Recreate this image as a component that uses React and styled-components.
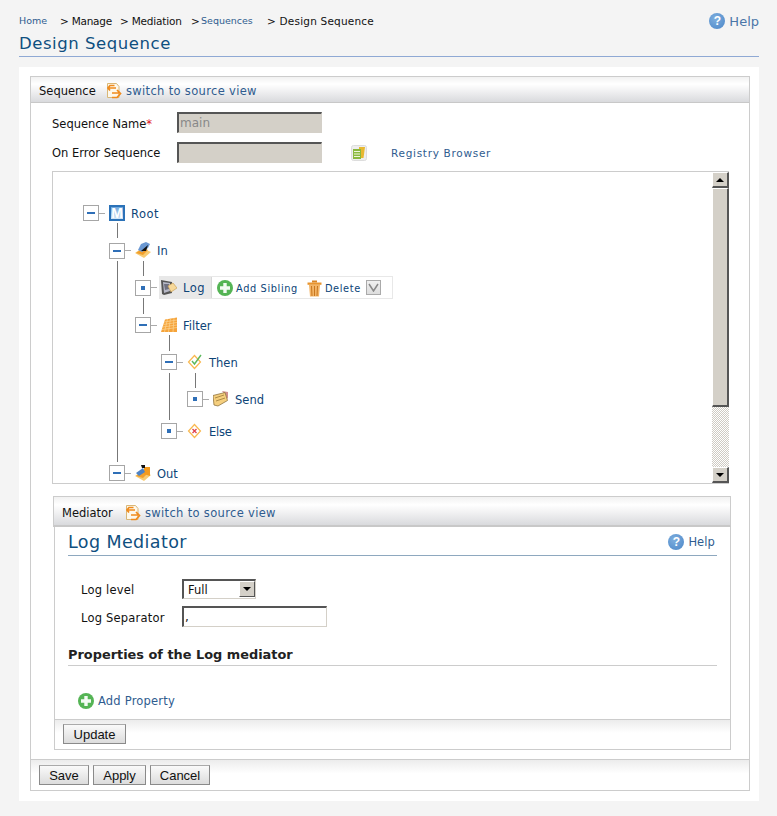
import React from "react";
import styled, { createGlobalStyle } from "styled-components";

const Global = createGlobalStyle`
  html, body { margin: 0; padding: 0; background: #f4f4f4; }
  body { font-family: "DejaVu Sans", Verdana, sans-serif; font-size: 11px; color: #111; }
`;

const Page = styled.div`
  width: 777px;
  height: 816px;
  box-sizing: border-box;
  padding: 14px 18px 0 19px;
  overflow: hidden;
`;
const Top = styled.div`
  height: 42px;
  border-bottom: 1px solid #8fa9d4;
  position: relative;
  box-sizing: content-box;
`;
const Crumbs = styled.div`
  display: flex;
  height: 14px;
  line-height: 14px;
  white-space: pre;
  color: #111;
`;
const Crumb = styled.span`
  width: ${(p) => p.$w}px;
  color: ${(p) => (p.$link ? "#2f5c8f" : "#111")};
  font-size: ${(p) => (p.$link ? "9.5px" : "10.5px")};
  letter-spacing: ${(p) => p.$ls || 0}px;
`;
const Title = styled.h1`
  margin: 5px 0 0;
  padding-top: 1px;
  font-size: 16.5px;
  line-height: 20px;
  font-weight: 400;
  color: #0f4f7f;
  letter-spacing: 0.55px;
`;
const TopHelp = styled.div`
  position: absolute;
  right: 0;
  top: -1px;
  display: flex;
  align-items: center;
  gap: 4px;
  font-size: 13px;
  color: #4a76a8;
`;
const HelpDot = styled.span`
  width: ${(p) => p.$s}px;
  height: ${(p) => p.$s}px;
  border-radius: 50%;
  background: radial-gradient(circle at 40% 35%, #7eaede, #4a86c8);
  color: #fff;
  font: bold ${(p) => p.$s - 4}px/${(p) => p.$s}px "Liberation Sans", sans-serif;
  text-align: center;
  display: inline-block;
`;
const Sheet = styled.div`
  margin-top: 10px;
  background: #fff;
  height: 734px;
  box-sizing: border-box;
  padding: 9px 9px 0 11px;
`;
const Box = styled.section`
  border: 1px solid #ccc;
  height: 715px;
  box-sizing: border-box;
  display: flex;
  flex-direction: column;
`;
const Header = styled.div`
  height: 26px;
  box-sizing: border-box;
  border-bottom: 1px solid #c8c8c8;
  background: linear-gradient(#f1f1f1, #ffffff 28%, #f4f4f5 50%, #d9dadd);
  display: flex;
  align-items: center;
  padding: 2px 0 0 8px;
  font-size: 11.5px;
  flex: none;
`;
const HeadLabel = styled.span`
  width: ${(p) => p.$w}px;
  color: #111;
`;
const Link = styled.a`
  color: #2f5c8f;
  font-size: ${(p) => p.$size || 11.5}px;
  letter-spacing: ${(p) => p.$ls ?? 0.33}px;
  margin-left: ${(p) => p.$ml || 0}px;
`;
const Body = styled.div`
  padding: 9px 21px 0 21px;
  flex: 1;
`;
const FormRow = styled.div`
  display: flex;
  align-items: center;
  height: 21px;
  margin-bottom: 9px;
`;
const Label = styled.label`
  width: ${(p) => p.$w || 125}px;
  font-size: 11.5px;
  color: #111;
  padding-top: ${(p) => p.$pt ?? 2}px;
  letter-spacing: ${(p) => p.$ls || 0}px;
`;
const Req = styled.span`
  color: #e0141c;
`;
const Field = styled.div`
  width: ${(p) => p.$w}px;
  height: ${(p) => p.$h || 21}px;
  box-sizing: border-box;
  border: 2px solid;
  border-color: #555 #d4d0c8 #d4d0c8 #555;
  border-right-width: 1px;
  border-bottom-width: 1px;
  background: ${(p) => (p.$light ? "#fff" : "#d4d0c8")};
  color: #888;
  font-size: 12px;
  line-height: 18px;
  padding-left: 1px;
  position: relative;
`;
const Tree = styled.div`
  margin-top: -1px;
  width: 677px;
  height: 313px;
  box-sizing: border-box;
  border: 1px solid #ccc;
  border-right: 0;
  display: flex;
  position: relative;
`;
const Canvas = styled.div`
  flex: 1;
  position: relative;
  overflow: hidden;
`;
const Scroll = styled.div`
  width: 17px;
  display: flex;
  flex-direction: column;
  background: repeating-conic-gradient(#cfcbc3 0 25%, #fff 0 50%) 0 0 / 2px 2px;
  flex: none;
  height: 311px;
`;
const ScrollBtn = styled.div`
  box-sizing: border-box;
  height: ${(p) => p.$h}px;
  background: #d4d0c8;
  border: 1px solid;
  border-color: #fff #555 #555 #fff;
  border-right-width: 2px;
  border-bottom-width: 2px;
  display: flex;
  align-items: center;
  justify-content: center;
  flex: none;
`;
const Fill = styled.div`
  flex: 1;
`;
const Tri = styled.i`
  width: 0;
  height: 0;
  border-left: 4px solid transparent;
  border-right: 4px solid transparent;
  ${(p) => (p.$up ? "border-bottom: 4px solid #000;" : "border-top: 4px solid #000;")}
`;
const Line = styled.div`
  position: absolute;
  left: ${(p) => p.$x - 53}px;
  top: ${(p) => p.$y - 172}px;
  width: ${(p) => p.$w || 1}px;
  height: ${(p) => p.$h || 1}px;
  background: ${(p) => (p.$w ? "#aaa" : "#777")};
`;
const Toggle = styled.div`
  position: absolute;
  left: ${(p) => p.$x - 53}px;
  top: ${(p) => p.$y - 172}px;
  width: 16px;
  height: 16px;
  box-sizing: border-box;
  border: 1px solid #a6a6a6;
  background: #fff;
  &::after {
    content: "";
    position: absolute;
    background: #2f6fb7;
    left: ${(p) => (p.$leaf ? 5 : 3)}px;
    top: ${(p) => (p.$leaf ? 5 : 6)}px;
    width: ${(p) => (p.$leaf ? 4 : 8)}px;
    height: ${(p) => (p.$leaf ? 4 : 2)}px;
  }
`;
const NodeLabel = styled.span`
  position: absolute;
  left: ${(p) => p.$x - 53}px;
  top: ${(p) => p.$y - 172 - 7}px;
  line-height: 16px;
  font-size: 11.5px;
  color: #0d4477;
  letter-spacing: ${(p) => p.$ls || 0}px;
`;
const NodeIcon = styled.div`
  position: absolute;
  left: ${(p) => p.$x - 53}px;
  top: ${(p) => p.$y - 172}px;
  width: 16px;
  height: 16px;
  display: flex;
`;
const MBadge = styled(NodeIcon)`
  box-sizing: border-box;
  border: 2px solid #2b72b8;
  background: linear-gradient(#6ea6dc, #d5e6f6);
  color: #fff;
  font: bold 14px/12px "Liberation Sans", sans-serif;
  justify-content: center;
`;
const Selected = styled.div`
  position: absolute;
  left: ${159 - 53}px;
  top: ${276 - 172}px;
  width: 234px;
  height: 23px;
  box-sizing: border-box;
  border: 1px solid #e8e8e8;
  display: flex;
  align-items: center;
`;
const SelectedHead = styled.div`
  width: 51px;
  height: 21px;
  background: #e8e8e8;
  flex: none;
  border-right: 1px solid #d8d8d8;
`;
const Action = styled.span`
  display: flex;
  align-items: center;
  font-size: 9.8px;
  letter-spacing: 0.62px;
  padding-top: 1px;
  color: #0d4477;
  margin-left: ${(p) => p.$ml}px;
  gap: ${(p) => p.$gap}px;
`;
const Drop = styled.span`
  width: 15px;
  height: 15px;
  box-sizing: border-box;
  border: 1px solid #aaa;
  background: linear-gradient(#f0f0f0, #ddd);
  margin-left: 5px;
  display: flex;
  align-items: center;
  justify-content: center;
`;
const Mediator = styled.section`
  margin-top: 12px;
  margin-left: 1px;
  width: 678px;
  height: 254px;
  box-sizing: border-box;
  display: flex;
  flex-direction: column;
`;
const MedHeader = styled(Header)`
  height: 31px;
  border: 1px solid #ccc;
  border-bottom: 2px solid #c8c8c8;
  padding-top: 3px;
`;
const MedBody = styled.div`
  flex: 1;
  margin-left: 1px;
  border: 1px solid #ccc;
  border-top: 0;
  display: flex;
  flex-direction: column;
  min-height: 0;
`;
const MedMain = styled.div`
  flex: 1;
  padding: 0 13px;
`;
const SubHead = styled.div`
  height: 28px;
  border-bottom: 1px solid #8ea8bf;
  display: flex;
  justify-content: space-between;
  align-items: center;
`;
const SubTitle = styled.h2`
  margin: 0;
  padding-top: 1px;
  font-size: 17.5px;
  font-weight: 400;
  letter-spacing: 0.4px;
  color: #0f4f7f;
`;
const SubHelp = styled.span`
  display: flex;
  align-items: center;
  gap: 4px;
  font-size: 11.5px;
  color: #2f5c8f;
  padding: 2px 2px 0 0;
  letter-spacing: 0.1px;
`;
const MedRows = styled.div`
  padding: 22px 0 0 13px;
`;
const MedRow = styled.div`
  display: flex;
  align-items: center;
  height: 21px;
  margin-bottom: ${(p) => p.$mb || 0}px;
`;
const Select = styled(Field)`
  color: #111;
  font-size: 11.5px;
  padding-left: 4px;
  line-height: 19px;
`;
const SelectBtn = styled.span`
  position: absolute;
  right: 0;
  top: 0;
  width: 16px;
  height: 16px;
  box-sizing: border-box;
  background: #d4d0c8;
  border: 1px solid;
  border-color: #fff #555 #555 #fff;
  display: flex;
  align-items: center;
  justify-content: center;
`;
const SepValue = styled.span`
  color: #111;
`;
const PropsTitle = styled.h3`
  margin: 17px 0 0;
  height: 21px;
  line-height: 22px;
  font-size: 12.9px;
  font-weight: 700;
  color: #222;
  border-bottom: 1px solid #ccc;
`;
const AddRow = styled.div`
  display: flex;
  align-items: center;
  gap: 4px;
  margin: 27px 0 0 10px;
`;
const Bar = styled.div`
  height: ${(p) => p.$h}px;
  box-sizing: border-box;
  border-top: 1px solid #ccc;
  background: linear-gradient(#ececec, #fff 45%);
  padding: ${(p) => p.$pad};
  display: flex;
  gap: 4px;
  flex: none;
`;
const Btn = styled.button`
  font: 13px/1 "Liberation Sans", Arial, sans-serif;
  height: 20px;
  width: ${(p) => p.$w}px;
  padding: 0;
  box-sizing: border-box;
  color: #111;
  border: 1px solid #8a8a8a;
  border-top-color: #aaa;
  background: linear-gradient(#fafafa, #dcdcdc);
`;

const SourceIcon = () => (
  <svg width="16" height="17" viewBox="0 0 16 17" style={{ flex: "none" }}>
    <path d="M1.500 1.500h9l2.500 3v11h-11.500z" fill="#fdf8ec" stroke="#d9b777" />
    <path d="M8.500 3.500H4L2 6l2 2.500M3 6h7" fill="none" stroke="#f08a1c" strokeWidth="1.700" />
    <path d="M6 11h7M11 8l3.500 3.500L11 15.500H6" fill="none" stroke="#f08a1c" strokeWidth="1.700" />
  </svg>
);
const PlusIcon = () => (
  <svg width="16" height="16" viewBox="0 0 16 16" style={{ flex: "none" }}>
    <circle cx="8" cy="8" r="8" fill="#55b455" />
    <path d="M8 3v10M3 8h10" stroke="#f4fbf4" strokeWidth="3.400" />
  </svg>
);
const TrashIcon = () => (
  <svg width="15" height="17" viewBox="0 0 15 17" style={{ flex: "none" }}>
    <path d="M5 0.500h5v2H5z" fill="#d98524" />
    <path d="M0.500 2.500h14v2.300H0.500z" fill="#e8952e" />
    <path d="M2 5h11l-1 11.500H3z" fill="#f3b566" />
    <path d="M4.500 6l.5 10M7.500 6v10M10.500 6l-.5 10" stroke="#c9761e" />
  </svg>
);
const RegistryIcon = () => (
  <svg width="16" height="16" viewBox="0 0 16 16" style={{ flex: "none", marginLeft: 29 }}>
    <rect x="0.500" y="0.500" width="15" height="15" rx="2" fill="#eee" stroke="#ddd" />
    <path d="M8 2h6l-1.500 11H8z" fill="#e8b830" />
    <rect x="2" y="4" width="8" height="10" fill="#8ab83e" />
    <path d="M3 6.500h6M3 9h6M3 11.500h6" stroke="#eef6da" />
  </svg>
);
const Flow = ({ out }) => (
  <svg width="16" height="16" viewBox="0 0 16 16">
    <path d="M0 11l7-5 9 4-7 6z" fill="#f8cb73" />
    <path d="M1 11l7-5 5 2-5 5z" fill="#f29f2b" />
    {out ? (
      <>
        <path d="M9 2h6v9l-6-2z" fill="#f39a1e" />
        <path d="M1 8l7-5 2 4-6 4z" fill="#4f83c4" />
        <path d="M6 0h4v3H7z" fill="#111" />
      </>
    ) : (
      <>
        <path d="M3 8l3-6 5-2 4 2-2 4-6 4z" fill="#6b98d2" />
        <path d="M6 9l7-6-2 6z" fill="#111" />
      </>
    )}
  </svg>
);
const LogIcon = () => (
  <svg width="16" height="16" viewBox="0 0 16 16">
    <path d="M0 1l11 2v11l-8 2-2-1z" fill="#555" />
    <path d="M2 3l7 1v8l-6 2z" fill="#b6b8c6" />
    <path d="M3 5l5 0v5l-4 1z" fill="#6f7080" />
    <path d="M7 7l5-3 4 5-6 4z" fill="#f7d99a" stroke="#c9a05a" strokeWidth=".7" />
  </svg>
);
const FilterIcon = () => (
  <svg width="16" height="16" viewBox="0 0 16 16">
    <path d="M4 2.500L16 .5v14.500H0z" fill="#f5a33a" />
    <path d="M3 5l13-2M2 7.500l14-2M1.500 10l14.500-2M1 12.500l15-2M6.500 2l-3 13M9.500 1.500L7.500 15M13 1l-1 14" stroke="#fbd08c" strokeWidth=".8" />
  </svg>
);
const Diamond = ({ ok }) => (
  <svg width="16" height="16" viewBox="0 0 16 16">
    <path d="M7.500 1.500l6 6.500-6 6.500-6-6.500z" fill="#fff" stroke="#f9b84f" strokeWidth="1.200" />
    {ok ? (
      <path d="M5 7l2.500 3L14 1" fill="none" stroke="#5cb85c" strokeWidth="1.400" />
    ) : (
      <path d="M5.500 6l4 4M9.500 6l-4 4" stroke="#e0424a" strokeWidth="1.300" />
    )}
  </svg>
);
const SendIcon = () => (
  <svg width="16" height="16" viewBox="0 0 16 16">
    <path d="M9 0l6 1v7z" fill="#cf8f8f" />
    <path d="M0 4.500l12-3 2.500 8L5 15l-4-1z" fill="#f5cf7e" stroke="#8f7440" strokeWidth=".8" />
    <path d="M2 7l9-3M3 10l9-3" stroke="#9b7a38" strokeWidth=".8" />
  </svg>
);
const Chevron = () => (
  <svg width="11" height="9" viewBox="0 0 11 9">
    <path d="M1 1l4.500 7L10 1" fill="none" stroke="#888" strokeWidth="1.500" />
  </svg>
);

const lines = [
  { $x: 117, $y: 223, $h: 15 },
  { $x: 117, $y: 261, $h: 201 },
  { $x: 143, $y: 261, $h: 15 },
  { $x: 143, $y: 298, $h: 16 },
  { $x: 169, $y: 335, $h: 16 },
  { $x: 169, $y: 373, $h: 47 },
  { $x: 195, $y: 373, $h: 15 },
  { $x: 99, $y: 213, $w: 6 },
  { $x: 125, $y: 250, $w: 6 },
  { $x: 151, $y: 287, $w: 6 },
  { $x: 151, $y: 325, $w: 6 },
  { $x: 177, $y: 362, $w: 6 },
  { $x: 203, $y: 399, $w: 6 },
  { $x: 177, $y: 431, $w: 6 },
  { $x: 125, $y: 473, $w: 6 },
];
const nodes = [
  { x: 109, y: 243, leaf: false },
  { x: 83, y: 205, leaf: false },
  { x: 135, y: 280, leaf: true },
  { x: 135, y: 317, leaf: false },
  { x: 161, y: 354, leaf: false },
  { x: 187, y: 391, leaf: true },
  { x: 161, y: 423, leaf: true },
  { x: 109, y: 465, leaf: false },
];
const icons = [
  { x: 135, y: 242, el: <Flow /> },
  { x: 161, y: 279, el: <LogIcon /> },
  { x: 161, y: 317, el: <FilterIcon /> },
  { x: 187, y: 354, el: <Diamond ok /> },
  { x: 213, y: 391, el: <SendIcon /> },
  { x: 187, y: 423, el: <Diamond /> },
  { x: 135, y: 465, el: <Flow out /> },
];
const labels = [
  ["Root", 131, 213, 0.5],
  ["In", 157, 250, 0],
  ["Log", 183, 287, 0.5],
  ["Filter", 183, 325, 0],
  ["Then", 209, 362, 0],
  ["Send", 235, 399, 0],
  ["Else", 209, 431, -0.2],
  ["Out", 157, 473, 0],
];

export default function App() {
  return (
    <Page>
      <Global />
      <Top>
        <Crumbs>
          <Crumb $link $w={41}>Home</Crumb>
          <Crumb $w={60} $ls={-0.25}>{">"} Manage</Crumb>
          <Crumb $w={71} $ls={-0.2}>{">"} Mediation</Crumb>
          <Crumb $w={10}>{">"}</Crumb>
          <Crumb $link $w={66}>Sequences</Crumb>
          <Crumb $w={120} $ls={0.2}>{">"} Design Sequence</Crumb>
        </Crumbs>
        <Title>Design Sequence</Title>
        <TopHelp>
          <HelpDot $s={16}>?</HelpDot>
          Help
        </TopHelp>
      </Top>
      <Sheet>
        <Box>
          <Header>
            <HeadLabel $w={67}>Sequence</HeadLabel>
            <SourceIcon />
            <Link $ml={4}>switch to source view</Link>
          </Header>
          <Body>
            <FormRow>
              <Label>
                Sequence Name<Req>*</Req>
              </Label>
              <Field $w={145}>main</Field>
            </FormRow>
            <FormRow>
              <Label $pt={0}>On Error Sequence</Label>
              <Field $w={145} />
              <RegistryIcon />
              <Link $ml={24} $size={10.5} $ls={0.7}>Registry Browser</Link>
            </FormRow>
            <Tree>
              <Canvas>
                {lines.map((l, i) => (
                  <Line key={i} {...l} />
                ))}
                {nodes.map((n, i) => (
                  <Toggle key={i} $x={n.x} $y={n.y} $leaf={n.leaf} />
                ))}
                <Selected>
                  <SelectedHead />
                  <Action $ml={5} $gap={3}>
                    <PlusIcon />
                    Add Sibling
                  </Action>
                  <Action $ml={9} $gap={3}>
                    <TrashIcon />
                    Delete
                  </Action>
                  <Drop>
                    <Chevron />
                  </Drop>
                </Selected>
                <MBadge $x={109} $y={205}>M</MBadge>
                {icons.map((c, i) => (
                  <NodeIcon key={i} $x={c.x} $y={c.y}>
                    {c.el}
                  </NodeIcon>
                ))}
                {labels.map(([t, x, y, ls]) => (
                  <NodeLabel key={t} $x={x} $y={y} $ls={ls}>
                    {t}
                  </NodeLabel>
                ))}
              </Canvas>
              <Scroll>
                <ScrollBtn $h={16}>
                  <Tri $up />
                </ScrollBtn>
                <ScrollBtn $h={219} />
                <Fill />
                <ScrollBtn $h={16}>
                  <Tri />
                </ScrollBtn>
              </Scroll>
            </Tree>
            <Mediator>
              <MedHeader>
                <HeadLabel $w={63}>Mediator</HeadLabel>
                <SourceIcon />
                <Link $ml={4}>switch to source view</Link>
              </MedHeader>
              <MedBody>
                <MedMain>
                  <SubHead>
                    <SubTitle>Log Mediator</SubTitle>
                    <SubHelp>
                      <HelpDot $s={16}>?</HelpDot>
                      Help
                    </SubHelp>
                  </SubHead>
                  <MedRows>
                    <MedRow $mb={7}>
                      <Label $w={101} $ls={0.2}>Log level</Label>
                      <Select $w={74} $h={20} $light>
                        Full
                        <SelectBtn>
                          <Tri />
                        </SelectBtn>
                      </Select>
                    </MedRow>
                    <MedRow>
                      <Label $w={101} $ls={0.2}>Log Separator</Label>
                      <Field $w={145} $light>
                        <SepValue>,</SepValue>
                      </Field>
                    </MedRow>
                  </MedRows>
                  <PropsTitle>Properties of the Log mediator</PropsTitle>
                  <AddRow>
                    <PlusIcon />
                    <Link $ls={0.2}>Add Property</Link>
                  </AddRow>
                </MedMain>
                <Bar $h={30} $pad="4px 0 0 8px">
                  <Btn type="button" $w={63}>Update</Btn>
                </Bar>
              </MedBody>
            </Mediator>
          </Body>
          <Bar $h={31} $pad="5px 0 0 8px">
            <Btn type="button" $w={50}>Save</Btn>
            <Btn type="button" $w={53}>Apply</Btn>
            <Btn type="button" $w={60}>Cancel</Btn>
          </Bar>
        </Box>
      </Sheet>
    </Page>
  );
}
